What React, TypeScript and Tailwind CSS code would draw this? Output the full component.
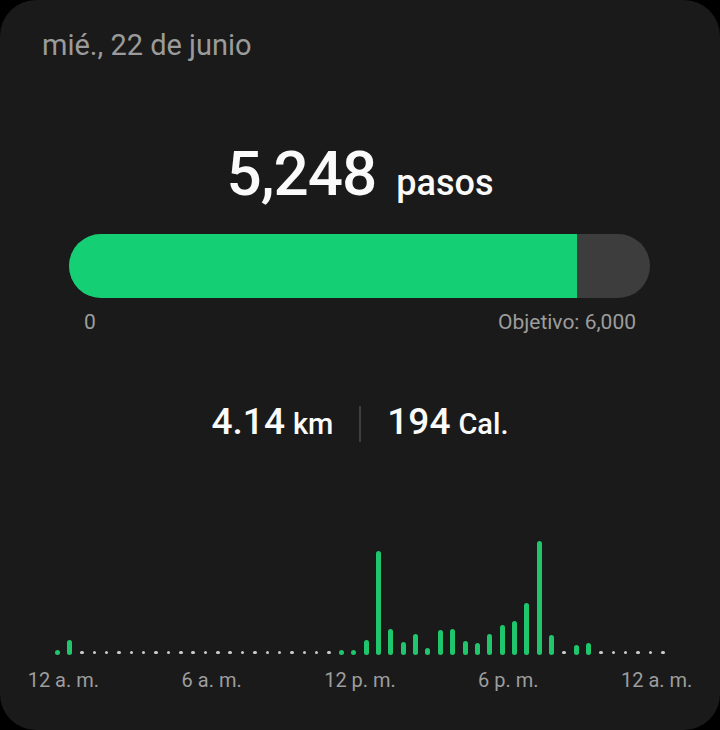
const bars: (number | 'dot' | 'g')[] = [
  'g', 15, 'dot', 'dot', 'dot', 'dot', 'dot', 'dot', 'dot', 'dot',
  'dot', 'dot', 'dot', 'dot', 'dot', 'dot', 'dot', 'dot', 'dot', 'dot',
  'dot', 'dot', 'dot', 'g', 'g', 14.5, 103.5, 25.5, 12.5, 21,
  6.5, 25, 25.5, 13.5, 12, 20.5, 29.5, 33.5, 52, 113.5,
  20, 'dot', 9.5, 11.5, 'dot', 'dot', 'dot', 'dot', 'dot', 'dot',
];

const labels = [
  { text: '12 a. m.', col: 'col-start-[1]' },
  { text: '6 a. m.', col: 'col-start-[13]' },
  { text: '12 p. m.', col: 'col-start-[25]' },
  { text: '6 p. m.', col: 'col-start-[37]' },
  { text: '12 a. m.', col: 'col-start-[49]' },
];

function StepChart() {
  return (
    <div className="mx-[51px] w-[618px]">
      <div className="grid h-[120px] grid-cols-[repeat(50,minmax(0,1fr))] items-end">
        {bars.map((b, i) => (
          <div key={i} className="flex justify-center">
            {b === 'dot' ? (
              <div className="mb-[0.5px] h-[3.5px] w-[3.5px] rounded-full bg-[#cacaca]" />
            ) : b === 'g' ? (
              <div className="h-[5px] w-[5px] rounded-full bg-[#1fc66b]" />
            ) : (
              <div className="w-[5px] rounded-full bg-[#1fc66b]" style={{ height: b }} />
            )}
          </div>
        ))}
      </div>
      <div className="mt-[13px] grid grid-cols-[repeat(50,minmax(0,1fr))]">
        {labels.map((l, i) => (
          <div key={i} className={`${l.col} col-span-2 flex justify-center`}>
            <span className="whitespace-nowrap text-[20px] leading-[24px] text-[#9d9d9d]">{l.text}</span>
          </div>
        ))}
      </div>
    </div>
  );
}

export default function App() {
  return (
    <div className="min-h-[730px] w-[720px] bg-black font-['Roboto',sans-serif]">
      <div className="h-[730px] w-[720px] overflow-hidden rounded-[36px] bg-[#1a1a1a]">
        {/* fecha */}
        <div className="pl-[42px] pt-[28px] text-[29px] leading-[34px] text-[#9b9b9b]">mié., 22 de junio</div>

        {/* pasos */}
        <div className="mt-[81px] flex items-baseline justify-center gap-[20px] text-[#fafafa]">
          <span className="text-[62px] font-medium leading-[62px] tracking-[-1px]">5,248</span>
          <span className="text-[36px] font-medium leading-none">pasos</span>
        </div>

        {/* barra de progreso */}
        <div className="ml-[69px] mt-[29px] flex h-[64px] w-[581px] overflow-hidden rounded-full bg-[#3d3d3d]">
          <div className="h-full w-[87.47%] bg-[#14cf73]" />
        </div>
        <div className="ml-[69px] mt-[12px] flex w-[581px] justify-between pl-[15px] pr-[14px] text-[21px] leading-[24px] text-[#9d9d9d]">
          <span>0</span>
          <span>Objetivo: 6,000</span>
        </div>

        {/* distancia y calorías */}
        <div className="mt-[68px] flex items-center justify-center text-[#fafafa]">
          <div className="flex items-baseline gap-[8px]">
            <span className="text-[37px] font-medium leading-[40px]">4.14</span>
            <span className="text-[29px] font-medium">km</span>
          </div>
          <div className="mx-[26px] h-[36px] w-[2px] bg-[#3f3f3f]" />
          <div className="flex items-baseline gap-[8px]">
            <span className="text-[37px] font-medium leading-[40px]">194</span>
            <span className="text-[29px] font-medium">Cal.</span>
          </div>
        </div>

        {/* gráfico por hora */}
        <div className="mt-[88px]">
          <StepChart />
        </div>
      </div>
    </div>
  );
}
